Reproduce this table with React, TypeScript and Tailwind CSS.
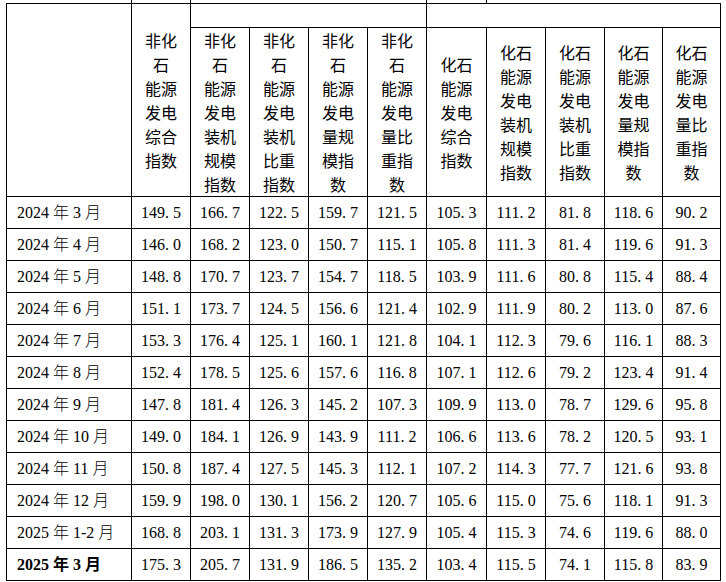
import React from 'react'

const headers = [
  ['非化', '石', '能源', '发电', '综合', '指数'],
  ['非化', '石', '能源', '发电', '装机', '规模', '指数'],
  ['非化', '石', '能源', '发电', '装机', '比重', '指数'],
  ['非化', '石', '能源', '发电', '量规', '模指', '数'],
  ['非化', '石', '能源', '发电', '量比', '重指', '数'],
  ['化石', '能源', '发电', '综合', '指数'],
  ['化石', '能源', '发电', '装机', '规模', '指数'],
  ['化石', '能源', '发电', '装机', '比重', '指数'],
  ['化石', '能源', '发电', '量规', '模指', '数'],
  ['化石', '能源', '发电', '量比', '重指', '数'],
]

const rows: [string, string[]][] = [
  ['2024 年 3 月', ['149.5', '166.7', '122.5', '159.7', '121.5', '105.3', '111.2', '81.8', '118.6', '90.2']],
  ['2024 年 4 月', ['146.0', '168.2', '123.0', '150.7', '115.1', '105.8', '111.3', '81.4', '119.6', '91.3']],
  ['2024 年 5 月', ['148.8', '170.7', '123.7', '154.7', '118.5', '103.9', '111.6', '80.8', '115.4', '88.4']],
  ['2024 年 6 月', ['151.1', '173.7', '124.5', '156.6', '121.4', '102.9', '111.9', '80.2', '113.0', '87.6']],
  ['2024 年 7 月', ['153.3', '176.4', '125.1', '160.1', '121.8', '104.1', '112.3', '79.6', '116.1', '88.3']],
  ['2024 年 8 月', ['152.4', '178.5', '125.6', '157.6', '116.8', '107.1', '112.6', '79.2', '123.4', '91.4']],
  ['2024 年 9 月', ['147.8', '181.4', '126.3', '145.2', '107.3', '109.9', '113.0', '78.7', '129.6', '95.8']],
  ['2024 年 10 月', ['149.0', '184.1', '126.9', '143.9', '111.2', '106.6', '113.6', '78.2', '120.5', '93.1']],
  ['2024 年 11 月', ['150.8', '187.4', '127.5', '145.3', '112.1', '107.2', '114.3', '77.7', '121.6', '93.8']],
  ['2024 年 12 月', ['159.9', '198.0', '130.1', '156.2', '120.7', '105.6', '115.0', '75.6', '118.1', '91.3']],
  ['2025 年 1-2 月', ['168.8', '203.1', '131.3', '173.9', '127.9', '105.4', '115.3', '74.6', '119.6', '88.0']],
  ['2025 年 3 月', ['175.3', '205.7', '131.9', '186.5', '135.2', '103.4', '115.5', '74.1', '115.8', '83.9']],
]

const widths = [125, 59, 59, 59, 59, 59, 60, 59, 59, 58, 58]

function HeadText({ lines }: { lines: string[] }) {
  return (
    <div className="flex flex-col items-center leading-[24px]">
      {lines.map((l, i) => (
        <div key={i}>{l}</div>
      ))}
    </div>
  )
}

const fmt = (v: string) => v.replace('.', '. ')

export default function App() {
  return (
    <div className="w-[726px] h-[582px] bg-white text-black pl-[6px]">
      {/* little stubs above the top border */}
      <div className="flex h-[3px]">
        <div className="w-[125px]" />
        <div className="w-px bg-black" />
        <div className="w-[58px]" />
        <div className="w-px bg-black" />
        <div className="w-[235px]" />
        <div className="w-px bg-black" />
        <div className="w-[59px]" />
        <div className="w-px bg-black" />
      </div>
      <table className="table-fixed border-collapse w-[715px] font-['Liberation_Serif','Noto_Sans_CJK_SC',serif] text-[16px]">
        <colgroup>
          {widths.map((w, i) => (
            <col key={i} style={{ width: w }} />
          ))}
        </colgroup>
        <thead className="font-['Noto_Sans_CJK_SC',sans-serif]">
          <tr className="h-[24px]">
            <td rowSpan={2} className="border border-black" />
            <td rowSpan={2} className="border border-black align-middle p-0">
              <HeadText lines={headers[0]} />
            </td>
            <td colSpan={4} className="border border-black" />
            <td colSpan={5} className="border border-black" />
          </tr>
          <tr className="h-[168px]">
            {headers.slice(1).map((h, i) => (
              <td key={i} className="border border-black align-middle p-0">
                <HeadText lines={h} />
              </td>
            ))}
          </tr>
        </thead>
        <tbody>
          {rows.map(([label, vals], r) => {
            const last = r === rows.length - 1
            return (
              <tr key={r} className="h-[32px]">
                <td className={`border border-black pl-[10px] p-0 whitespace-nowrap ${last ? 'font-bold' : 'font-light'}`}>
                  {label}
                </td>
                {vals.map((v, i) => (
                  <td key={i} className="border border-black text-center p-0 whitespace-nowrap">
                    {fmt(v)}
                  </td>
                ))}
              </tr>
            )
          })}
        </tbody>
      </table>
    </div>
  )
}
